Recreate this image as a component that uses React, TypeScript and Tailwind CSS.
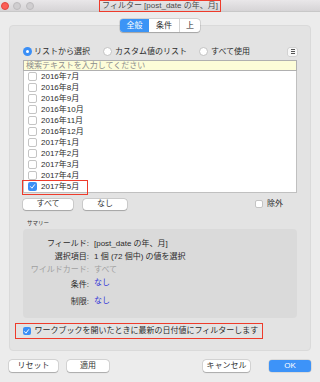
import React from "react";

const Check = () => (
  <svg viewBox="0 0 10 10" className="w-[7px] h-[7px]">
    <path d="M2.2 5.2 L4.2 7.4 L8 2.4" fill="none" stroke="white" strokeWidth="1.4" strokeLinecap="round" strokeLinejoin="round" />
  </svg>
);

const Box = ({ checked }: { checked?: boolean }) =>
  checked ? (
    <span className="w-[8.5px] h-[8.5px] rounded-[2px] bg-[#3b8ff6] flex items-center justify-center shrink-0">
      <Check />
    </span>
  ) : (
    <span className="w-[8.5px] h-[8.5px] rounded-[2px] bg-white border border-[#c4c4c4] shrink-0" />
  );

const Radio = ({ on }: { on?: boolean }) =>
  on ? (
    <span className="w-[9px] h-[9px] rounded-full bg-[#3b8ff6] flex items-center justify-center shrink-0">
      <span className="w-[3px] h-[3px] rounded-full bg-white" />
    </span>
  ) : (
    <span className="w-[9px] h-[9px] rounded-full bg-white border border-[#c2c2c2] shrink-0" />
  );

const Btn = ({ children, w, blue }: { children: React.ReactNode; w: string; blue?: boolean }) => (
  <div
    className={
      w +
      " h-[11.5px] rounded-[3px] flex items-center justify-center text-[8px] leading-none " +
      (blue
        ? "bg-[#3d93f8] text-white shadow-[0_0_0_0.5px_rgba(0,0,0,0.15)]"
        : "bg-white text-[#333] shadow-[0_0_0_0.5px_rgba(0,0,0,0.18),0_0.5px_1px_rgba(0,0,0,0.2)]")
    }
  >
    {children}
  </div>
);

const items = [
  "2016年7月",
  "2016年8月",
  "2016年9月",
  "2016年10月",
  "2016年11月",
  "2016年12月",
  "2017年1月",
  "2017年2月",
  "2017年3月",
  "2017年4月",
];

export default function App() {
  return (
    <div className="w-[320px] h-[382px] bg-[#ececec] flex flex-col overflow-hidden text-[#2b2b2b] [font-family:'Liberation_Sans','Noto_Sans_CJK_JP',sans-serif]">
      {/* title bar */}
      <div className="h-[12px] shrink-0 bg-linear-to-b from-[#e9e7e9] to-[#d6d4d6] border-b border-[#c8c8c8] grid grid-cols-[1fr_auto_1fr] items-center">
        <div className="flex gap-[4.5px] pl-[0.5px] items-center">
          <span className="w-[8px] h-[8px] rounded-full bg-[#fc5f57] border-[0.5px] border-[#e1463f]" />
          <span className="w-[8px] h-[8px] rounded-full bg-[#d0ced0] border-[0.5px] border-[#bdbbbd]" />
          <span className="w-[8px] h-[8px] rounded-full bg-[#d0ced0] border-[0.5px] border-[#bdbbbd]" />
        </div>
        <div className="h-[11.5px] self-start border-[1.5px] border-[#ee3b2b] px-[2px] flex items-center text-[8px] leading-none text-[#4a4a4a] whitespace-nowrap">
          フィルター [post_date の年、月]
        </div>
        <div />
      </div>

      {/* tabs */}
      <div className="mt-[7px] flex justify-center relative z-10 shrink-0">
        <div className="flex h-[13px] rounded-[3px] bg-white shadow-[0_0_0_0.5px_rgba(0,0,0,0.18),0_0.5px_1px_rgba(0,0,0,0.2)] text-[8px] leading-none overflow-hidden">
          <div className="w-[29px] bg-[#3b94f6] text-white flex items-center justify-center">全般</div>
          <div className="w-[30px] flex items-center justify-center">条件</div>
          <div className="w-[21px] border-l border-[#d4d4d4] flex items-center justify-center">上</div>
        </div>
      </div>

      {/* panel */}
      <div className="mx-[9px] mt-[-7px] h-[326px] shrink-0 bg-[#e3e3e3] rounded-[4px] border border-[#dadada] px-[13px] pt-[21px] flex flex-col text-[8px] leading-none">
        {/* radio row */}
        <div className="h-[9px] flex items-center">
          <div className="w-[80px] flex items-center gap-[2px]">
            <Radio on />
            <span>リストから選択</span>
          </div>
          <div className="w-[96px] flex items-center gap-[3px]">
            <Radio />
            <span>カスタム値のリスト</span>
          </div>
          <div className="flex items-center gap-[3px]">
            <Radio />
            <span>すべて使用</span>
          </div>
          <div className="ml-auto w-[9px] h-[8px] rounded-[1.5px] bg-[#f7f7f7] shadow-[0_0_0_0.5px_rgba(0,0,0,0.15)] flex flex-col items-center justify-center gap-[1px]">
            <span className="w-[4px] h-[0.7px] bg-[#555]" />
            <span className="w-[4px] h-[0.7px] bg-[#555]" />
            <span className="w-[4px] h-[0.7px] bg-[#555]" />
          </div>
        </div>

        {/* list */}
        <div className="mt-[4px] h-[133px] bg-white border-x border-b border-[#c0c0c0] flex flex-col">
          <div className="h-[11px] -mx-[1px] border border-[#b0b0b0] bg-[#fdfdd8] flex items-center pl-[2px] text-[#8c8c8c]">
            検索テキストを入力してください
          </div>
          {items.map((t) => (
            <div key={t} className="h-[11px] flex items-center pl-[4px] gap-[4.5px]">
              <Box />
              <span>{t}</span>
            </div>
          ))}
          <div className="h-[11px] flex items-center pl-[4px] gap-[4.5px] relative">
            <Box checked />
            <span>2017年5月</span>
            <span className="absolute left-[-2px] top-[-1.5px] w-[66px] h-[15px] border-[1.5px] border-[#ee3b2b]" />
          </div>
        </div>

        {/* buttons row */}
        <div className="mt-[5.5px] h-[11.5px] flex items-center">
          <Btn w="w-[50px]">すべて</Btn>
          <div className="ml-[10px]">
            <Btn w="w-[44px]">なし</Btn>
          </div>
          <div className="ml-auto mr-[14px] flex items-center gap-[4px]">
            <span className="w-[8px] h-[8px] rounded-[2px] bg-white border border-[#c4c4c4]" />
            <span>除外</span>
          </div>
        </div>

        {/* summary */}
        <div className="mt-[10px] h-[8px] pl-[4px] text-[5.5px] flex items-center text-[#333]">サマリー</div>
        <div className="mt-[1px] h-[89px] rounded-[4px] bg-[#dadada] pt-[8px] grid grid-cols-[66px_1fr] grid-rows-[13px_13px_13px_17px_18px] items-center">
          <div className="text-right">フィールド:</div>
          <div className="pl-[5px]">[post_date の年、月]</div>
          <div className="text-right">選択項目:</div>
          <div className="pl-[5px]">1 個 (72 個中) の値を選択</div>
          <div className="text-right text-[#a0a0a0]">ワイルドカード:</div>
          <div className="pl-[5px] text-[#a0a0a0]">すべて</div>
          <div className="text-right">条件:</div>
          <div className="pl-[5px] text-[#3434d8] -mt-[3px]">なし</div>
          <div className="text-right">制限:</div>
          <div className="pl-[5px] text-[#3434d8] -mt-[3px]">なし</div>
        </div>

        {/* checkbox row */}
        <div className="mt-[5px] -ml-[8px] w-[248px] h-[16px] border-[1.5px] border-[#ee3b2b] flex items-center pl-[6.5px] gap-[3.5px] whitespace-nowrap">
          <Box checked />
          <span>ワークブックを開いたときに最新の日付値にフィルターします</span>
        </div>
      </div>

      {/* bottom buttons */}
      <div className="mt-[9px] px-[9px] flex items-center">
        <Btn w="w-[49px]">リセット</Btn>
        <div className="ml-[9px]">
          <Btn w="w-[42px]">適用</Btn>
        </div>
        <div className="ml-auto">
          <Btn w="w-[47px]">キャンセル</Btn>
        </div>
        <div className="ml-[19px]">
          <Btn w="w-[42px]" blue>
            OK
          </Btn>
        </div>
      </div>
    </div>
  );
}
